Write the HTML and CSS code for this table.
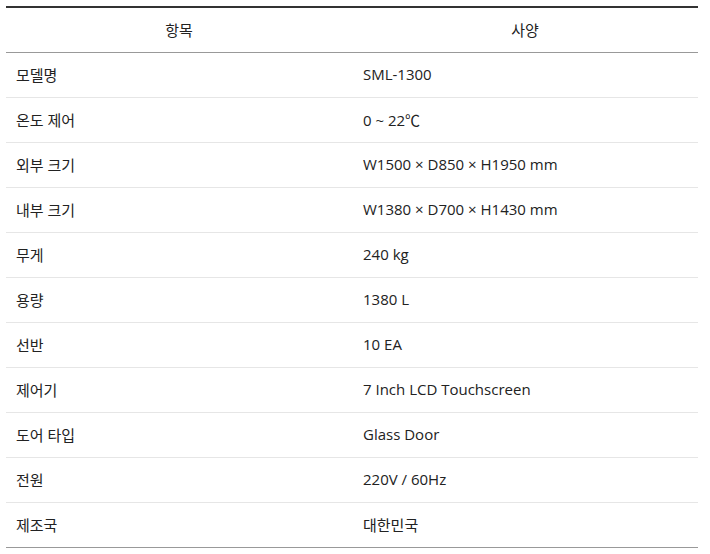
FILE: index.html
```html
<!DOCTYPE html>
<html lang="ko">
<head>
<meta charset="utf-8">
<link rel="stylesheet" href="styles.css">
</head>
<body>
<table class="spec">
  <thead>
    <tr><th>항목</th><th>사양</th></tr>
  </thead>
  <tbody>
    <tr><td>모델명</td><td>SML-1300</td></tr>
    <tr><td>온도 제어</td><td>0 ~ 22℃</td></tr>
    <tr><td>외부 크기</td><td>W1500 × D850 × H1950 mm</td></tr>
    <tr><td>내부 크기</td><td>W1380 × D700 × H1430 mm</td></tr>
    <tr><td>무게</td><td>240 kg</td></tr>
    <tr><td>용량</td><td>1380 L</td></tr>
    <tr><td>선반</td><td>10 EA</td></tr>
    <tr><td>제어기</td><td>7 Inch LCD Touchscreen</td></tr>
    <tr><td>도어 타입</td><td>Glass Door</td></tr>
    <tr><td>전원</td><td>220V / 60Hz</td></tr>
    <tr><td>제조국</td><td>대한민국</td></tr>
  </tbody>
</table>
</body>
</html>
```
FILE: styles.css
```css
html, body {
  margin: 0;
  padding: 0;
  background: #fff;
}
body {
  padding: 6px 12px 0 6px;
  font-family: "Open Sans", "Noto Sans CJK KR", sans-serif;
  font-size: 15px;
  color: #222;
}
.spec {
  width: 692px;
  border-collapse: collapse;
  table-layout: fixed;
  border-top: 2px solid #333;
  border-bottom: 1px solid #999;
}
.spec th {
  height: 42px;
  padding: 0 10px 2px;
  font-weight: 400;
  text-align: center;
  border-bottom: 1px solid #999;
}
.spec td {
  height: 42px;
  padding: 0 10px 2px;
  text-align: left;
  border-bottom: 1px solid #e6e6e6;
}
.spec td + td {
  padding-left: 11px;
}
.spec tbody tr:last-child td {
  border-bottom: 1px solid #999;
}
```
